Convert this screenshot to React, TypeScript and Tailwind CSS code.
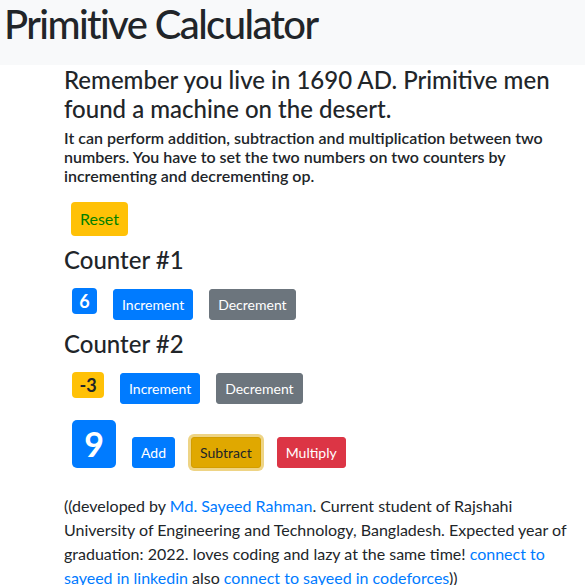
import type { ReactNode } from "react";

const font = { fontFamily: "Lato, 'Noto Sans', sans-serif" };

function SmallButton({ children, className }: { children: ReactNode; className: string }) {
  return (
    <button
      type="button"
      className={`h-[31px] rounded-[3px] border px-2 text-[14px] leading-[21px] text-white ${className}`}
    >
      {children}
    </button>
  );
}

export default function App() {
  return (
    <div className="min-h-[585px] bg-white text-[#212529]" style={font}>
      <header className="h-[65px] bg-[#f8f9fa] pl-1">
        <h1 className="text-[40px] font-medium leading-[48px] tracking-[-1.6px]">Primitive Calculator</h1>
      </header>

      <main className="w-[575px] pl-16">
        <h3 className="mt-[1px] text-[24px] font-medium leading-[28.8px]">
          Remember you live in 1690 AD. Primitive men found a machine on the desert.
        </h3>
        <h6 className="mt-1 text-[16px] font-semibold leading-[19.2px]">
          It can perform addition, subtraction and multiplication between two numbers. You have to set
          the two numbers on two counters by incrementing and decrementing op.
        </h6>

        <button
          type="button"
          className="mt-[17px] ml-[7px] flex h-[34px] w-[57px] items-center justify-center rounded-[4px] bg-[#ffc107] text-[16px] text-[#008000]"
        >
          Reset
        </button>

        <h3 className="mt-[10px] text-[24px] font-medium leading-[28.8px]">Counter #1</h3>
        <div className="mt-[13px] flex items-start gap-4 pl-2">
          <span className="flex h-[26px] w-[25px] items-center justify-center rounded-[4px] bg-[#007bff] text-[18px] font-bold leading-none text-white">
            6
          </span>
          <SmallButton className="mt-px border-[#007bff] bg-[#007bff]">Increment</SmallButton>
          <SmallButton className="mt-px border-[#6c757d] bg-[#6c757d]">Decrement</SmallButton>
        </div>

        <h3 className="mt-[10px] text-[24px] font-medium leading-[28.8px]">Counter #2</h3>
        <div className="mt-[13px] flex items-start gap-4 pl-2">
          <span className="flex h-[26px] w-[32px] items-center justify-center rounded-[4px] bg-[#ffc107] text-[18px] font-bold leading-none text-[#212529]">
            -3
          </span>
          <SmallButton className="mt-px border-[#007bff] bg-[#007bff]">Increment</SmallButton>
          <SmallButton className="mt-px border-[#6c757d] bg-[#6c757d]">Decrement</SmallButton>
        </div>

        <div className="mt-4 flex items-end gap-4 pl-2">
          <span className="flex h-[48px] w-[44px] items-center justify-center rounded-[5px] bg-[#007bff] text-[34px] font-bold leading-none text-white">
            9
          </span>
          <SmallButton className="border-[#007bff] bg-[#007bff]">Add</SmallButton>
          <button
            type="button"
            className="h-[31px] rounded-[3px] border border-[#d39e00] bg-[#e0a800] px-2 text-[14px] leading-[21px] text-[#212529] shadow-[0_0_0_3px_rgba(222,170,12,0.5)]"
          >
            Subtract
          </button>
          <SmallButton className="border-[#dc3545] bg-[#dc3545]">Multiply</SmallButton>
        </div>

        <p className="mt-[26px] text-[16px] leading-6">
          ((developed by <a className="text-[#007bff]">Md. Sayeed Rahman</a>. Current student of
          Rajshahi University of Engineering and Technology, Bangladesh. Expected year of graduation:
          2022. loves coding and lazy at the same time!{" "}
          <a className="text-[#007bff]">connect to sayeed in linkedin</a> also{" "}
          <a className="text-[#007bff]">connect to sayeed in codeforces</a>))
        </p>
      </main>
    </div>
  );
}
